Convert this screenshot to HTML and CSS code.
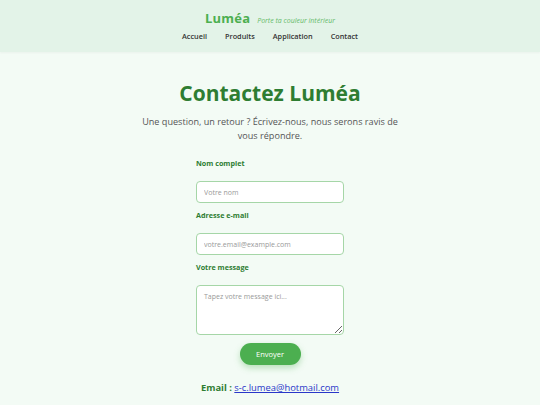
FILE: index.html
```html
<!DOCTYPE html>
<html lang="fr">
<head>
<meta charset="utf-8">
<title>Contact Luméa</title>
<link rel="stylesheet" href="styles.css">
</head>
<body>
<header class="site-header">
  <div class="brand">
    <span class="logo">Luméa</span>
    <span class="tagline">Porte ta couleur intérieur</span>
  </div>
  <nav class="nav">
    <a href="#">Accueil</a>
    <a href="#">Produits</a>
    <a href="#">Application</a>
    <a href="#">Contact</a>
  </nav>
</header>
<main class="main">
  <h1 class="title">Contactez Luméa</h1>
  <p class="intro">Une question, un retour ? Écrivez-nous, nous serons ravis de vous répondre.</p>
  <form class="form">
    <label class="label" for="nom">Nom complet</label>
    <input class="field" id="nom" type="text" placeholder="Votre nom">
    <label class="label" for="mail">Adresse e-mail</label>
    <input class="field" id="mail" type="email" placeholder="votre.email@example.com">
    <label class="label" for="msg">Votre message</label>
    <textarea class="field area" id="msg" placeholder="Tapez votre message ici..."></textarea>
    <button class="btn" type="button">Envoyer</button>
  </form>
  <p class="contact"><strong>Email :</strong> <a href="#">s-c.lumea@hotmail.com</a></p>
</main>
</body>
</html>
```
FILE: styles.css
```css
* { box-sizing: border-box; }
html, body { margin: 0; padding: 0; }
body {
  font-family: "Open Sans", "DejaVu Sans", sans-serif;
  background: #f3fbf5;
  color: #333;
}
.site-header {
  background: #e3f3e8;
  height: 52px;
  display: flex;
  flex-direction: column;
  align-items: center;
  padding-top: 9px;
  box-shadow: 0 1px 2px rgba(0,0,0,0.04);
}
.brand { display: flex; align-items: baseline; gap: 7px; }
.logo { font-size: 13px; font-weight: 700; color: #4caf50; letter-spacing: 0.2px; }
.tagline { font-size: 7px; font-style: italic; color: #66bb6a; }
.nav { display: flex; gap: 18px; margin-top: 4px; }
.nav a { font-size: 7.3px; font-weight: 600; color: #333; text-decoration: none; }
.main { display: flex; flex-direction: column; align-items: center; }
.title {
  margin: 26px 0 0;
  font-size: 21px;
  font-weight: 700;
  color: #2e7d32;
  line-height: 30px;
}
.intro {
  width: 262px;
  margin: 7px 0 0;
  text-align: center;
  font-size: 9.1px;
  line-height: 14px;
  color: #555;
}
.form { width: 148px; display: flex; flex-direction: column; margin-top: 15px; }
.label { font-size: 7.2px; font-weight: 700; color: #2e7d32; height: 10px; line-height: 10px; margin-bottom: 13px; }
.field {
  height: 22px;
  border: 1px solid #a5d6a7;
  border-radius: 4px;
  background: #fff;
  padding: 0 7px;
  font-family: inherit;
  font-size: 7px;
  margin: 0 0 7px;
  outline: none;
}
.field::placeholder { color: #999; }
.area { height: 50px; padding-top: 6px; resize: vertical; margin-bottom: 8px; }
.btn {
  align-self: center;
  width: 61px;
  height: 22px;
  border: none;
  border-radius: 11px;
  background: #4caf50;
  color: #fff;
  font-family: inherit;
  font-size: 7.5px;
  box-shadow: 0 3px 6px rgba(76,175,80,0.35);
}
.contact { margin: 16px 0 0; font-size: 9.4px; color: #2e7d32; }
.contact strong { font-weight: 700; }
.contact a { color: #2a37c9; }
```
